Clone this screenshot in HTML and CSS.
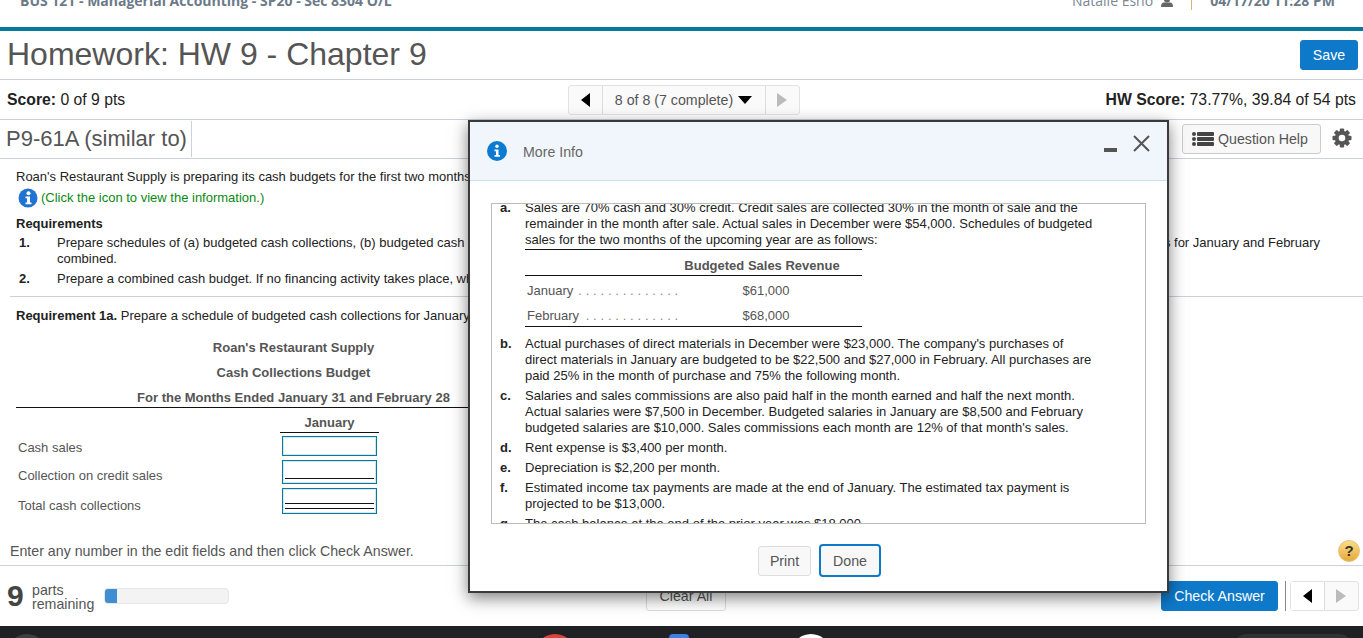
FILE: index.html
```html
<!DOCTYPE html>
<html lang="en">
<head>
    <meta charset="UTF-8">
    <title>Homework: HW 9 - Chapter 9</title>
    <link rel="stylesheet" href="styles.css">
</head>
<body>
    <!-- course bar, scrolled partly out of view -->
    <div class="topbar">
        <div class="course">BUS 121 - Managerial Accounting - SP20 - Sec 8304 O/L</div>
        <div class="user">
            <span>Natalie Esho</span>
            <svg class="user-icon" width="12" height="10" viewBox="0 0 12 10"><circle cx="6" cy="1.5" r="3" fill="#666"/><path d="M0 9 Q0 4.5 3 4.5 H9 Q12 4.5 12 9 Z" fill="#666"/></svg>
            <span class="user-sep"></span>
            <span class="date">04/17/20 11:28 PM</span>
        </div>
    </div>

    <div class="title-row">
        <h1>Homework: HW 9 - Chapter 9</h1>
        <button class="btn-blue save">Save</button>
    </div>

    <div class="score-row">
        <div><b>Score:</b> 0 of 9 pts</div>
        <div class="pager">
            <span class="cell arrow"><i class="tri-left"></i></span>
            <span class="cell pager-text">8 of 8 (7 complete) <i class="caret"></i></span>
            <span class="cell arrow"><i class="tri-right"></i></span>
        </div>
        <div class="hw-score"><b>HW Score:</b> 73.77%, 39.84 of 54 pts</div>
    </div>

    <div class="question-row">
        <div class="question-name">P9-61A (similar to)</div>
        <div class="question-tools">
            <button class="help-btn">
                <svg width="22" height="14" viewBox="0 0 22 14"><g fill="#444"><circle cx="2" cy="2" r="2"/><circle cx="2" cy="7" r="2"/><circle cx="2" cy="12" r="2"/><rect x="5" y="0" width="17" height="4" rx="1"/><rect x="5" y="5" width="17" height="4" rx="1"/><rect x="5" y="10" width="17" height="4" rx="1"/></g></svg>
                Question Help
            </button>
            <svg class="gear" width="20" height="20" viewBox="0 0 20 20">
                <g fill="#555">
                    <circle cx="10" cy="10" r="7.2"/>
                    <rect x="7.8" y="0.5" width="4.4" height="19" rx="1"/>
                    <rect x="7.8" y="0.5" width="4.4" height="19" rx="1" transform="rotate(45 10 10)"/>
                    <rect x="7.8" y="0.5" width="4.4" height="19" rx="1" transform="rotate(90 10 10)"/>
                    <rect x="7.8" y="0.5" width="4.4" height="19" rx="1" transform="rotate(135 10 10)"/>
                </g>
                <circle cx="10" cy="10" r="3.3" fill="#fff"/>
            </svg>
        </div>
    </div>

    <div class="problem">
        <p class="intro">Roan's Restaurant Supply is preparing its cash budgets for the first two months of the upcoming year.</p>
        <p class="click-info">
            <svg width="20" height="20" viewBox="0 0 20 20"><circle cx="10" cy="10" r="9.5" fill="#1f74d3"/><circle cx="10.5" cy="5.2" r="2" fill="#fff"/><path d="M7.5 8.5 H12 V14.5 H13.5 V16.2 H7.5 V14.5 H9 V10.2 H7.5 Z" fill="#fff"/></svg>
            <span>(Click the icon to view the information.)</span>
        </p>
        <div class="req-title">Requirements</div>
        <div class="req-item">
            <b>1.</b>
            <div>
                <div class="req-line"><span>Prepare schedules of (a) budgeted cash collections, (b) budgeted cash disbursements for purchases,</span><span>and (c) budgeted cash disbursements for operating expenses for January and February</span></div>
                <div>combined.</div>
            </div>
        </div>
        <div class="req-item second">
            <b>2.</b>
            <div>Prepare a combined cash budget. If no financing activity takes place, what is the budgeted cash balance?</div>
        </div>
        <hr class="rule">
        <p class="req-1a"><b>Requirement 1a.</b> Prepare a schedule of budgeted cash collections for January and February.</p>

        <div class="budget">
            <div class="budget-head">Roan's Restaurant Supply</div>
            <div class="budget-head">Cash Collections Budget</div>
            <div class="budget-head last">For the Months Ended January 31 and February 28</div>
            <div class="budget-row month-row"><span class="budget-label"></span><span class="month">January</span></div>
            <div class="budget-rows">
                <div class="budget-row"><span class="budget-label">Cash sales</span><span class="entry h1"></span></div>
                <div class="budget-row"><span class="budget-label">Collection on credit sales</span><span class="entry h2 single"></span></div>
                <div class="budget-row"><span class="budget-label">Total cash collections</span><span class="entry h3 double"></span></div>
            </div>
        </div>
    </div>

    <div class="enter-row">
        <span>Enter any number in the edit fields and then click Check Answer.</span>
        <span class="help-dot">?</span>
    </div>

    <div class="footer">
        <div class="parts">
            <span class="parts-num">9</span>
            <span class="parts-text">parts<br>remaining</span>
            <span class="progress"><span class="progress-fill"></span></span>
        </div>
        <button class="clear-btn">Clear All</button>
        <div class="footer-right">
            <button class="btn-blue check">Check Answer</button>
            <span class="footer-sep"></span>
            <div class="pager small">
                <span class="cell arrow"><i class="tri-left"></i></span>
                <span class="cell arrow"><i class="tri-right"></i></span>
            </div>
        </div>
    </div>

    <div class="dock">
        <span class="dock-icon d-grey"></span>
        <span class="dock-icon d-red"></span>
        <span class="dock-icon d-blue"></span>
        <span class="dock-icon d-white"></span>
        <span class="dock-icon d-pill"></span>
    </div>

    <!-- More Info dialog -->
    <div class="modal">
        <div class="modal-head">
            <svg width="20" height="20" viewBox="0 0 20 20"><circle cx="10" cy="10" r="10" fill="#0b7ad1"/><circle cx="10" cy="5.2" r="1.7" fill="#fff"/><path d="M7.5 8.5 H11.5 V14 H13 V15.7 H7.5 V14 H9 V10.2 H7.5 Z" fill="#fff"/></svg>
            <span class="modal-title">More Info</span>
            <span class="modal-min"></span>
            <svg class="modal-close" width="17" height="17" viewBox="0 0 17 17"><path d="M1 1 L16 16 M16 1 L1 16" stroke="#555" stroke-width="2" fill="none"/></svg>
        </div>
        <div class="modal-body">
            <div class="info-box">
                <div class="info-scroll">
                    <div class="info-item">
                        <b>a.</b>
                        <div>
                            Sales are 70% cash and 30% credit. Credit sales are collected 30% in the month of sale and the remainder in the month after sale. Actual sales in December were $54,000. Schedules of budgeted sales for the two months of the upcoming year are as follows:
                            <div class="sales">
                                <div class="sales-head">Budgeted Sales Revenue</div>
                                <div class="sales-row"><span class="sales-month">January <span class="dots">..............</span></span><span class="sales-amt">$61,000</span></div>
                                <div class="sales-row"><span class="sales-month">February <span class="dots">.............</span></span><span class="sales-amt">$68,000</span></div>
                            </div>
                        </div>
                    </div>
                    <div class="info-item">
                        <b>b.</b>
                        <div>Actual purchases of direct materials in December were $23,000. The company's purchases of direct materials in January are budgeted to be $22,500 and $27,000 in February. All purchases are paid 25% in the month of purchase and 75% the following month.</div>
                    </div>
                    <div class="info-item">
                        <b>c.</b>
                        <div>Salaries and sales commissions are also paid half in the month earned and half the next month. Actual salaries were $7,500 in December. Budgeted salaries in January are $8,500 and February budgeted salaries are $10,000. Sales commissions each month are 12% of that month's sales.</div>
                    </div>
                    <div class="info-item">
                        <b>d.</b>
                        <div>Rent expense is $3,400 per month.</div>
                    </div>
                    <div class="info-item">
                        <b>e.</b>
                        <div>Depreciation is $2,200 per month.</div>
                    </div>
                    <div class="info-item">
                        <b>f.</b>
                        <div>Estimated income tax payments are made at the end of January. The estimated tax payment is projected to be $13,000.</div>
                    </div>
                    <div class="info-item">
                        <b>g.</b>
                        <div>The cash balance at the end of the prior year was $18,000.</div>
                    </div>
                </div>
            </div>
            <div class="modal-buttons">
                <button class="plain-btn">Print</button>
                <button class="plain-btn done">Done</button>
            </div>
        </div>
    </div>
</body>
</html>
```

FILE: styles.css
```css
* {
    box-sizing: border-box;
}
body {
    margin: 0;
    height: 100vh;
    overflow: hidden;
    display: flex;
    flex-direction: column;
    font-family: "Liberation Sans", Arial, sans-serif;
    font-size: 13px;
    line-height: 16px;
    color: #222;
    background-color: #fff;
}
button {
    font-family: inherit;
    cursor: pointer;
}

/* top bar */
.topbar {
    height: 31px;
    flex: none;
    border-bottom: 4px solid #047a9c;
    display: flex;
    justify-content: space-between;
    overflow: hidden;
    padding: 0 28px 0 20px;
    font-family: "Open Sans", sans-serif;
    font-size: 14px;
    color: #6b7a88;
}
.course, .user {
    margin-top: -7px;
    line-height: 16px;
    font-weight: bold;
}
.user {
    display: flex;
    align-items: flex-start;
    font-weight: normal;
    color: #7c8792;
}
.user-icon {
    margin: 5px 0 0 8px;
}
.user-sep {
    width: 1px;
    height: 17px;
    background-color: #d9b36c;
    margin: 0 18px;
}
.date {
    font-weight: bold;
    color: #6b7a88;
}

/* heading rows */
.title-row {
    height: 49px;
    flex: none;
    display: flex;
    justify-content: space-between;
    align-items: center;
    padding: 0 5px 0 7px;
    border-bottom: 1px solid #ccd0dc;
}
h1 {
    margin: -2px 0 0;
    font-size: 32px;
    line-height: 40px;
    font-weight: normal;
    color: #555;
}
.btn-blue {
    background-color: #0f79c9;
    color: #fff;
    border: 1px solid #0f79c9;
    border-radius: 3px;
    font-size: 14.2px;
    height: 30px;
    padding: 0;
}
.save {
    width: 58px;
}
.score-row {
    height: 40px;
    flex: none;
    display: grid;
    grid-template-columns: 1fr auto 1fr;
    align-items: center;
    padding: 0 7px;
    border-bottom: 1px solid #ccd0dc;
    font-size: 15.75px;
    color: #222;
}
.hw-score {
    text-align: right;
}
.pager {
    display: flex;
    height: 30px;
    margin-left: 4px;
    border: 1px solid #e2e2e2;
    border-radius: 3px;
    background-color: #fafafa;
}
.cell {
    display: flex;
    align-items: center;
    justify-content: center;
}
.arrow {
    width: 33px;
}
.pager-text {
    width: 164px;
    gap: 5px;
    font-size: 14.2px;
    color: #555;
    border-left: 1px solid #ddd;
    border-right: 1px solid #ddd;
}
.tri-left, .tri-right, .caret {
    display: block;
    width: 0;
    height: 0;
}
.tri-left {
    border-top: 7px solid transparent;
    border-bottom: 7px solid transparent;
    border-right: 9px solid #000;
}
.tri-right {
    border-top: 7px solid transparent;
    border-bottom: 7px solid transparent;
    border-left: 10px solid #bbb;
}
.caret {
    border-left: 7px solid transparent;
    border-right: 7px solid transparent;
    border-top: 8px solid #000;
}
.question-row {
    height: 39px;
    flex: none;
    display: flex;
    justify-content: space-between;
    align-items: center;
    padding-right: 11px;
    border-bottom: 1px solid #ccd0dc;
}
.question-name {
    font-size: 22px;
    line-height: 36px;
    color: #555;
    padding: 0 4px 0 6px;
    border-right: 1px solid #ccd0dc;
}
.question-tools {
    display: flex;
    align-items: center;
    gap: 11px;
}
.help-btn {
    width: 139px;
    height: 30px;
    display: flex;
    align-items: center;
    gap: 4px;
    padding: 0 0 0 9px;
    border: 1px solid #ccc;
    border-radius: 3px;
    background-color: #f8f8f8;
    color: #555;
    font-size: 14.2px;
}
.gear {
    margin-top: -2px;
}

/* problem statement */
.problem {
    flex: 1;
    min-height: 0;
    overflow: hidden;
    padding: 10px 0 0 16px;
}
.intro, .req-1a {
    margin: 0;
    white-space: nowrap;
}
.click-info {
    margin: 3px 0 0 2px;
    height: 20px;
    display: flex;
    align-items: center;
    gap: 3px;
    color: #0a8a12;
}
.req-title {
    margin-top: 8px;
    font-weight: bold;
}
.req-item {
    display: flex;
    margin: 3px 43px 0 3px;
}
.req-item.second {
    margin-top: 4px;
    white-space: nowrap;
}
.req-item > b {
    width: 38px;
    flex: none;
}
.req-item > div {
    flex: 1;
}
.req-line {
    display: flex;
    justify-content: space-between;
    white-space: nowrap;
}
.rule {
    margin: 9px 0 11px -6px;
    border: none;
    border-top: 1px solid #ccd0dc;
}
.budget {
    width: 555px;
    margin-top: 11px;
    color: #555;
}
.budget-head {
    height: 25px;
    line-height: 25px;
    text-align: center;
    font-weight: bold;
}
.budget-head.last {
    height: 23px;
    border-bottom: 1px solid #111;
}
.budget-row {
    display: flex;
    align-items: flex-end;
}
.budget-label {
    width: 264px;
    padding-left: 2px;
}
.month-row {
    height: 25px;
}
.month {
    width: 99px;
    height: 25px;
    line-height: 29px;
    text-align: center;
    font-weight: bold;
    border-bottom: 1px solid #111;
}
.budget-rows {
    display: flex;
    flex-direction: column;
    gap: 4px;
    padding-top: 3px;
}
.entry {
    display: block;
    position: relative;
    width: 95px;
    margin-left: 2px;
    border: 1px solid #047a9c;
    box-shadow: inset 0 0 0 1px #d5e8ee;
    background-color: #fff;
}
.h1 { height: 20px; }
.h2 { height: 24px; }
.h3 { height: 26px; }
.single::after, .double::after {
    content: "";
    position: absolute;
    left: 2px;
    right: 2px;
    bottom: 4px;
}
.single::after {
    border-bottom: 1px solid #111;
}
.double::after {
    height: 4px;
    border-top: 1px solid #111;
    border-bottom: 1px solid #111;
}

/* bottom of the page */
.enter-row {
    height: 28px;
    flex: none;
    display: flex;
    justify-content: space-between;
    align-items: flex-start;
    padding: 5px 3px 0 10px;
    border-bottom: 1px solid #ccd0dc;
    font-size: 14.2px;
    color: #555;
}
.help-dot {
    width: 22px;
    height: 22px;
    margin-top: -3px;
    border-radius: 50%;
    background: linear-gradient(#fbdc86, #e8a93b);
    border: 1px solid #e4c27a;
    color: #333;
    font-weight: bold;
    font-size: 15px;
    line-height: 20px;
    text-align: center;
}
.footer {
    height: 60px;
    flex: none;
    display: grid;
    grid-template-columns: 1fr auto 1fr;
    align-items: start;
    padding: 15px 4px 0 7px;
}
.parts {
    display: flex;
    align-items: center;
    height: 30px;
}
.parts-num {
    width: 25px;
    font-size: 30px;
    line-height: 30px;
    font-weight: bold;
    color: #444;
}
.parts-text {
    width: 72px;
    font-size: 14.2px;
    line-height: 14px;
    color: #555;
    margin-top: 2px;
}
.progress {
    width: 125px;
    height: 16px;
    margin-top: -1px;
    background-color: #f3f3f3;
    border: 1px solid #e6e6e6;
    border-radius: 4px;
    overflow: hidden;
}
.progress-fill {
    display: block;
    width: 12px;
    height: 100%;
    background-color: #3f8ed2;
}
.clear-btn {
    width: 80px;
    height: 30px;
    margin-left: 6px;
    background-color: #fff;
    border: 1px solid #ddd;
    border-radius: 3px;
    color: #555;
    font-size: 14.2px;
}
.footer-right {
    display: flex;
    justify-content: flex-end;
    height: 30px;
}
.check {
    width: 117px;
}
.footer-sep {
    width: 1px;
    background-color: #888;
    margin: 0 4px 0 7px;
}
.pager.small {
    margin-left: 0;
    width: 69px;
}
.pager.small .arrow {
    width: 34px;
}
.pager.small .arrow:first-child {
    background-color: #fff;
    border-right: 1px solid #ddd;
}
.dock {
    height: 12px;
    flex: none;
    background-color: #202124;
    overflow: hidden;
    display: flex;
    padding-top: 8px;
}
.dock-icon {
    display: block;
    flex: none;
    width: 40px;
    height: 40px;
    border-radius: 50%;
}
.d-grey {
    margin-left: 7px;
    background-color: #3c3f44;
}
.d-red {
    margin-left: 488px;
    background-color: #d9443b;
}
.d-blue {
    margin-left: 94px;
    width: 20px;
    background-color: #3d7fe0;
    border-radius: 4px;
}
.d-white {
    margin-left: 102px;
    background-color: #fff;
}
.d-pill {
    margin-left: 402px;
    width: 120px;
    background-color: #303236;
    border-radius: 14px;
}

/* dialog */
.modal {
    position: absolute;
    left: 468px;
    top: 120px;
    width: 701px;
    height: 473px;
    display: flex;
    flex-direction: column;
    background-color: #fff;
    border: 2px solid #3a3a3a;
    box-shadow: 0 5px 15px rgba(0, 0, 0, 0.5);
}
.modal-head {
    height: 59px;
    flex: none;
    display: flex;
    align-items: center;
    padding: 0 17px 0 17px;
    background-color: #f1f6fd;
    border-bottom: 1px solid #c5e0f5;
}
.modal-title {
    margin: 1px 0 0 16px;
    flex: 1;
    font-size: 14.2px;
    color: #666;
}
.modal-min {
    width: 13px;
    height: 4px;
    margin-top: -2px;
    background-color: #555;
}
.modal-close {
    margin: -16px 0 0 16px;
}
.modal-body {
    flex: 1;
    min-height: 0;
    padding: 22px 21px 0;
}
.info-box {
    height: 321px;
    border: 1px solid #bbb;
    overflow: hidden;
}
.info-scroll {
    margin-top: -4px;
    padding: 0 50px 0 8px;
}
.info-item {
    display: flex;
    margin-bottom: 4px;
}
.info-item > b {
    width: 25px;
    flex: none;
}
.sales {
    width: 337px;
    margin: 1px 0 5px;
    color: #555;
    border-top: 1px solid #111;
    border-bottom: 1px solid #111;
}
.sales-head {
    height: 26px;
    line-height: 31px;
    padding-left: 137px;
    text-align: center;
    font-weight: bold;
    border-bottom: 1px solid #111;
}
.sales-row {
    display: flex;
    height: 25px;
    line-height: 30px;
}
.sales-month {
    width: 157px;
    padding-left: 2px;
    display: flex;
    justify-content: space-between;
    white-space: nowrap;
}
.sales-amt {
    width: 180px;
    padding-right: 12px;
    text-align: center;
}
.dots {
    letter-spacing: 3.8px;
    color: #888;
}
.modal-buttons {
    display: flex;
    justify-content: center;
    align-items: center;
    gap: 8px;
    margin: 20px 0 0 2px;
}
.plain-btn {
    width: 53px;
    height: 30px;
    padding: 0;
    background-color: #f8f8f8;
    border: 1px solid #ddd;
    border-radius: 3px;
    color: #555;
    font-size: 14.2px;
}
.plain-btn.done {
    width: 62px;
    height: 33px;
    border: 2px solid #0f79c9;
    border-radius: 4px;
}
```
